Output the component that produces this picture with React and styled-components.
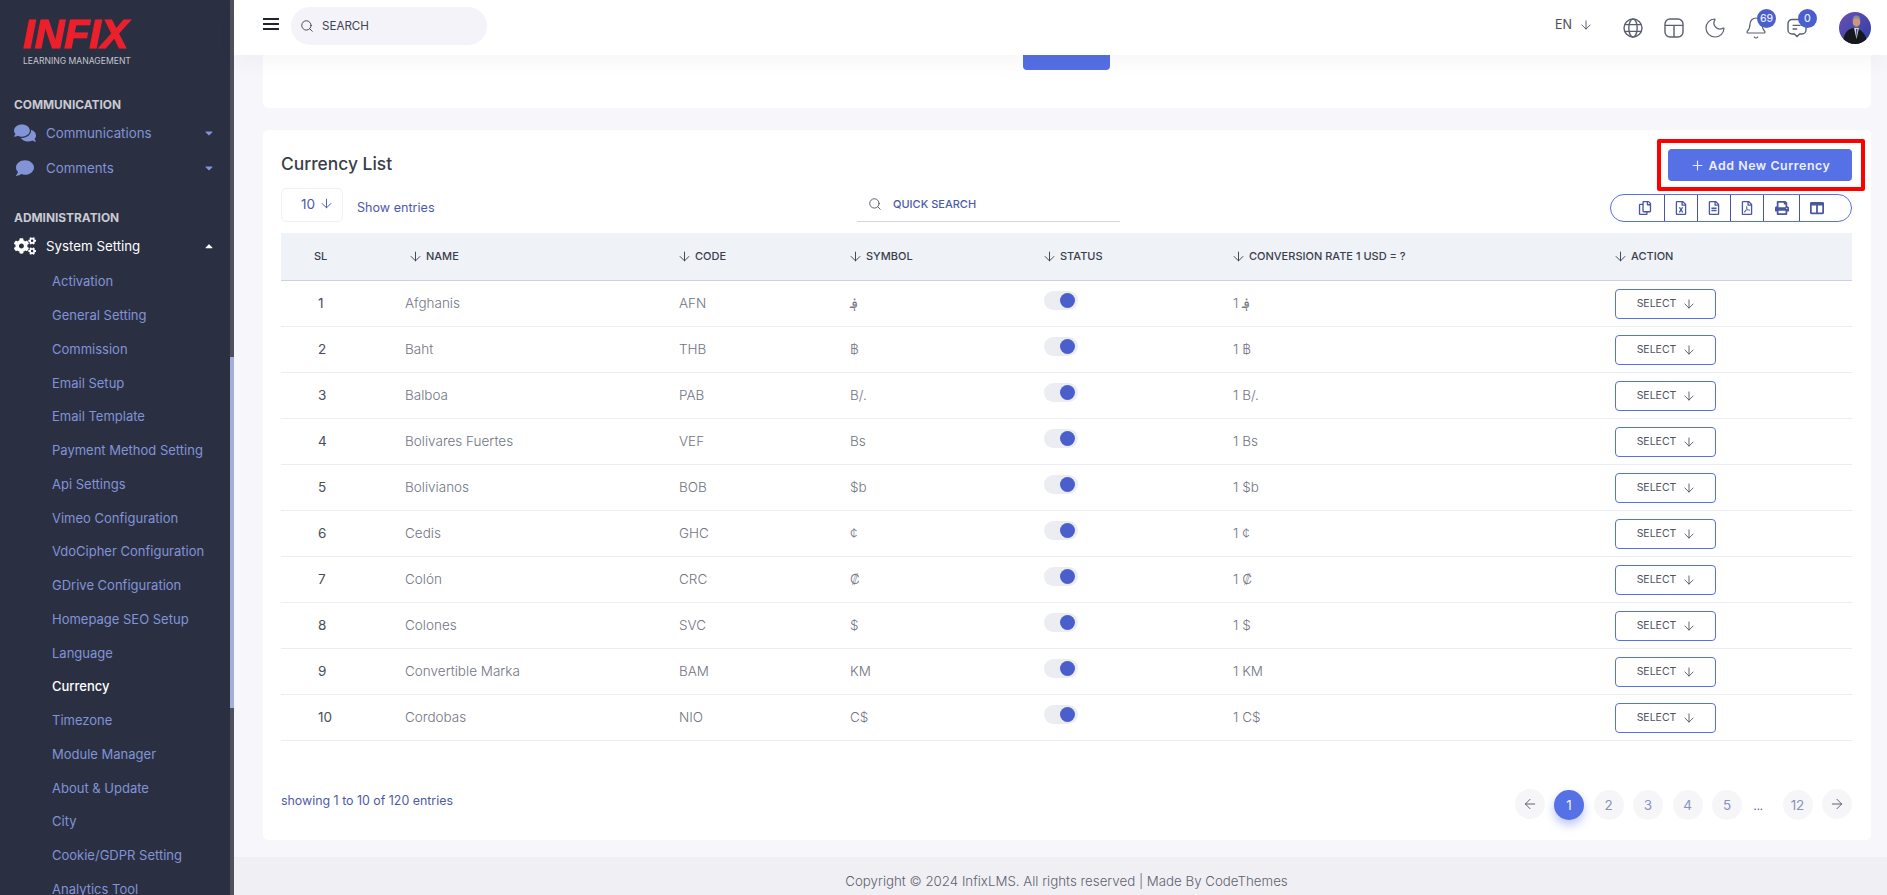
import React from "react";
import styled, { createGlobalStyle } from "styled-components";
import { ArrowDown, ArrowLeft, ArrowRight, Bell, Moon, Plus, Search } from "lucide-react";
import { FaCaretDown, FaCaretUp, FaCogs, FaColumns, FaComment, FaComments, FaPrint, FaRegCopy, FaRegFileAlt, FaRegFileExcel, FaRegFilePdf } from "react-icons/fa";

const rows = [
  ["Afghanis", "AFN", "؋"],
  ["Baht", "THB", "฿"],
  ["Balboa", "PAB", "B/."],
  ["Bolivares Fuertes", "VEF", "Bs"],
  ["Bolivianos", "BOB", "$b"],
  ["Cedis", "GHC", "¢"],
  ["Colón", "CRC", "₡"],
  ["Colones", "SVC", "$"],
  ["Convertible Marka", "BAM", "KM"],
  ["Cordobas", "NIO", "C$"],
];

const subMenu = [
  "Activation", "General Setting", "Commission", "Email Setup", "Email Template",
  "Payment Method Setting", "Api Settings", "Vimeo Configuration", "VdoCipher Configuration",
  "GDrive Configuration", "Homepage SEO Setup", "Language", "Currency", "Timezone",
  "Module Manager", "About & Update", "City", "Cookie/GDPR Setting", "Analytics Tool",
];

const GlobalStyle = createGlobalStyle`
  * { box-sizing: border-box; }
  html, body { margin: 0; height: 100%; overflow: hidden; }
  body { font-family: Inter, "Noto Sans", "DejaVu Sans", sans-serif; background: #f6f6fb; }
`;

const Shell = styled.div`
  display: flex;
  height: 100vh;
  overflow: hidden;
`;

const Sidebar = styled.aside`
  display: flex;
  flex: 0 0 234px;
  background: #2a3042;
`;

const Nav = styled.nav`
  flex: 1;
  overflow: hidden;
`;

const Track = styled.div`
  flex: 0 0 4px;
  background: #4e515d;
`;

const Thumb = styled.div`
  height: 351px;
  margin-top: 357px;
  background: #a5aed6;
`;

const Logo = styled.div`
  height: 95px;
  padding: 12px 0 0 23px;
`;

const LogoMark = styled.div`
  font-family: "Liberation Sans", sans-serif;
  font-size: 41px;
  font-weight: 700;
  font-style: italic;
  line-height: 44px;
  color: #ed1f2b;
  -webkit-text-stroke: 1.2px #ed1f2b;
`;

const LogoSub = styled.div`
  font-size: 8.6px;
  line-height: 10px;
  color: #c4c6cf;
  white-space: nowrap;
`;

const SectionLabel = styled.div`
  height: 20px;
  padding-left: 14px;
  font-size: 11.9px;
  font-weight: 700;
  line-height: 20px;
  color: #c9cad2;
  margin-top: ${(p) => p.$top || 0}px;
`;

const MenuItem = styled.div`
  display: flex;
  align-items: center;
  height: 35px;
  padding: 0 15px 0 14px;
  font-size: 13.3px;
  color: ${(p) => (p.$open ? "#ffffff" : "#8293d6")};
  svg:first-child { flex: 0 0 22px; margin-right: 10px; }
  svg:last-child { margin-left: auto; font-size: 12px; }
`;

const SubList = styled.div`
  padding-top: 2.4px;
`;

const SubItem = styled.div`
  height: 33.75px;
  padding-left: 52px;
  font-size: 13px;
  line-height: 33.75px;
  white-space: nowrap;
  color: ${(p) => (p.$active ? "#ffffff" : "#8293d6")};
  font-weight: ${(p) => (p.$active ? 500 : 400)};
`;

const Main = styled.div`
  display: flex;
  flex: 1;
  flex-direction: column;
  min-width: 0;
`;

const TopBar = styled.header`
  position: relative;
  z-index: 2;
  display: flex;
  align-items: center;
  flex: 0 0 55px;
  padding: 0 16px 0 29px;
  background: #ffffff;
  box-shadow: 0 8px 20px rgba(40, 40, 60, 0.035);
`;

const Burger = styled.svg`
  width: 16px;
  height: 12px;
  margin: 0 12px 7px 0;
`;

const SearchPill = styled.div`
  display: flex;
  align-items: center;
  gap: 8px;
  width: 196px;
  height: 38px;
  margin-bottom: 3px;
  padding-left: 9px;
  border-radius: 19px;
  background: #f3f3f9;
  font-size: 11.6px;
  color: #3f4350;
`;

const TopRight = styled.div`
  display: flex;
  align-items: center;
  margin-left: auto;
  gap: 21px;
`;

const Lang = styled.div`
  display: flex;
  align-items: center;
  gap: 7px;
  margin-right: 9px;
  margin-bottom: 6px;
  font-size: 12.5px;
  color: #4a4d59;
`;

const IconBox = styled.div`
  position: relative;
  width: 20px;
  height: 20px;
  color: #5b6070;
`;

const BigIcon = styled.span`
  display: block;
  margin: -2px;
  line-height: 0;
`;

const Badge = styled.span`
  position: absolute;
  top: -9px;
  left: 11px;
  min-width: 19px;
  height: 19px;
  border-radius: 50%;
  background: #4a5fcb;
  color: #e9ecfa;
  font-size: 10.5px;
  font-weight: 500;
  line-height: 19px;
  text-align: center;
`;

const Avatar = styled.svg`
  width: 32px;
  height: 32px;
  margin-left: 11px;
`;

const Content = styled.main`
  display: flex;
  flex: 1;
  flex-direction: column;
  gap: 22px;
  min-height: 0;
  padding: 0 16px 0 29px;
  overflow: hidden;
`;

const TopCard = styled.section`
  display: flex;
  justify-content: center;
  flex: 0 0 53px;
  padding-right: 2px;
  background: #ffffff;
  border-radius: 0 0 5px 5px;
`;

const CutButton = styled.div`
  width: 87px;
  height: 15px;
  border-radius: 0 0 4px 4px;
  background: #546fe4;
`;

const Card = styled.section`
  flex: 0 0 708px;
  padding: 19px 19px 20px 18px;
  background: #ffffff;
  border-radius: 5px;
`;

const CardHead = styled.div`
  display: flex;
  align-items: center;
  justify-content: space-between;
  height: 32px;
`;

const Title = styled.h3`
  margin: 0 0 3px;
  font-size: 17.4px;
  font-weight: 500;
  color: #3a3d4a;
`;

const AddButton = styled.button`
  position: relative;
  display: flex;
  align-items: center;
  justify-content: center;
  gap: 4px;
  width: 184px;
  height: 32px;
  padding: 0;
  border: 0;
  border-radius: 4px;
  background: #5670e6;
  color: #ecefff;
  font-family: inherit;
  font-size: 12.4px;
  font-weight: 600;
  letter-spacing: 0.55px;
  &::after {
    content: "";
    position: absolute;
    inset: -10px -13px -10px -11px;
    border: 4px solid #ff0000;
    border-radius: 2px;
  }
`;

const Toolbar = styled.div`
  display: grid;
  grid-template-columns: 576px 263px 1fr;
  height: 34px;
  margin: 7px 0 11px;
`;

const EntryWrap = styled.div`
  display: flex;
  align-items: center;
  gap: 14px;
`;

const EntrySelect = styled.div`
  display: flex;
  align-items: center;
  gap: 4px;
  width: 62px;
  height: 34px;
  padding: 0 0 3px 19px;
  border: 1px solid #eff0f5;
  border-radius: 5px;
  font-size: 13.5px;
  color: #4d5aa8;
`;

const ShowEntries = styled.span`
  padding-top: 4px;
  font-size: 12.6px;
  color: #4d5aa8;
`;

const QuickSearch = styled.div`
  display: flex;
  align-items: center;
  gap: 11px;
  padding: 0 0 1px 11px;
  border-bottom: 1px solid #d3d4e6;
  font-size: 11px;
  font-weight: 500;
  color: #4d5aa8;
  svg { color: #555866; }
`;

const ToolGroup = styled.div`
  display: flex;
  justify-self: end;
  width: 242px;
  height: 28px;
  margin-top: 6px;
  border: 1px solid #5670e6;
  border-radius: 14px;
`;

const ToolCell = styled.div`
  display: flex;
  align-items: center;
  justify-content: ${(p) => p.$align || "center"};
  flex: 0 0 ${(p) => p.$width}px;
  padding: ${(p) => p.$pad || "0"};
  color: #4957a3;
  font-size: 14px;
  & + & { border-left: 1px solid #4957a3; }
`;

const Table = styled.table`
  width: 1571px;
  border-collapse: collapse;
  table-layout: fixed;
`;

const Th = styled.th`
  height: 47px;
  padding: 0 0 0 ${(p) => p.$pad || 0}px;
  background: #eff2f7;
  border-bottom: 1px solid #c9d2e6;
  color: #3a3e4c;
  font-size: 11px;
  font-weight: 500;
  text-align: left;
  white-space: nowrap;
  svg { margin: 0 3px 0 -1px; vertical-align: -4px; }
`;

const Td = styled.td`
  height: 46px;
  padding: 0 0 0 ${(p) => p.$pad ?? 1}px;
  border-bottom: 1px solid #ecedf4;
  color: ${(p) => (p.$strong ? "#4a4d5a" : "#72757f")};
  font-size: 13.5px;
  font-weight: ${(p) => (p.$strong ? 400 : 300)};
`;

const Toggle = styled.span`
  display: flex;
  align-items: center;
  justify-content: flex-end;
  width: 34px;
  height: 19px;
  margin-bottom: 5px;
  padding-right: 3px;
  border-radius: 10px;
  background: #ecedf3;
  &::after {
    content: "";
    width: 15px;
    height: 15px;
    border-radius: 50%;
    background: #4a5fcb;
  }
`;

const SelectButton = styled.button`
  display: flex;
  align-items: center;
  justify-content: center;
  gap: 6px;
  width: 101px;
  height: 30px;
  margin-top: 1px;
  padding: 0 0 0 2px;
  border: 1px solid #5670e6;
  border-radius: 4px;
  background: #ffffff;
  color: #4e515e;
  font-family: inherit;
  font-size: 10.5px;
  font-weight: 400;
`;

const CardFoot = styled.div`
  display: flex;
  align-items: center;
  justify-content: space-between;
  height: 31px;
  margin-top: 48px;
`;

const Showing = styled.span`
  margin-bottom: 7px;
  font-size: 12.4px;
  color: #4d5aa8;
`;

const Pager = styled.div`
  display: flex;
  align-items: flex-start;
  gap: 9.5px;
`;

const PageButton = styled.span`
  display: flex;
  align-items: center;
  justify-content: center;
  width: 30px;
  height: 30px;
  margin-top: ${(p) => (p.$nav ? 0 : 1)}px;
  border-radius: 50%;
  background: ${(p) => (p.$active ? "#5670e6" : "#f6f6f9")};
  box-shadow: ${(p) => (p.$active ? "0 5px 10px rgba(86, 112, 230, 0.4)" : "none")};
  color: ${(p) => (p.$active ? "#f2f4ff" : p.$nav ? "#555866" : "#8a92bd")};
  font-size: 13.5px;
`;

const Dots = styled.span`
  width: 21.5px;
  padding: 10px 0 0 2px;
  font-size: 11px;
  color: #4957a3;
`;

const Footer = styled.footer`
  flex: 0 0 38px;
  padding: 15px 0 0 12px;
  background: #f0f0f4;
  color: #5f6270;
  font-size: 13.3px;
  font-weight: 300;
  line-height: 18px;
  text-align: center;
`;

const GlobeIcon = () => (
  <svg width="20" height="20" viewBox="0 0 20 20" fill="none" stroke="currentColor" strokeWidth="1.4">
    <circle cx="10" cy="10" r="9" />
    <ellipse cx="10" cy="10" rx="4.2" ry="9" />
    <path d="M1.8 6.6h16.4M1.8 13.4h16.4" />
  </svg>
);

const LayoutIcon = () => (
  <svg width="20" height="20" viewBox="0 0 20 20" fill="none" stroke="currentColor" strokeWidth="1.4">
    <rect x="1" y="1" width="18" height="18" rx="5" />
    <path d="M1 7.4h18M10 7.4V19" />
  </svg>
);

const MessageIcon = () => (
  <svg width="20" height="20" viewBox="0 0 20 20" fill="none" stroke="currentColor" strokeWidth="1.4">
    <path d="M5 1.5h10a4 4 0 0 1 4 4v6.5a4 4 0 0 1-4 4h-2.4L10 18.6 7.4 16H5a4 4 0 0 1-4-4V5.5a4 4 0 0 1 4-4z" />
    <path d="M5.6 7.4h8M5.6 11h4.6" />
  </svg>
);

const Arrow = ({ size = 15 }) => <ArrowDown size={size} strokeWidth={1.5} />;

const App = () => {
  return (
    <>
      <GlobalStyle />
      <Shell>
        <Sidebar>
          <Nav>
            <Logo>
              <LogoMark>INFIX</LogoMark>
              <LogoSub>LEARNING MANAGEMENT</LogoSub>
            </Logo>
            <SectionLabel>COMMUNICATION</SectionLabel>
            <MenuItem>
              <FaComments size={20} />
              Communications
              <FaCaretDown />
            </MenuItem>
            <MenuItem>
              <FaComment size={18} />
              Comments
              <FaCaretDown />
            </MenuItem>
            <SectionLabel $top={23}>ADMINISTRATION</SectionLabel>
            <MenuItem $open>
              <FaCogs size={22} />
              System Setting
              <FaCaretUp />
            </MenuItem>
            <SubList>
              {subMenu.map((name) => (
                <SubItem key={name} $active={name === "Currency"}>{name}</SubItem>
              ))}
            </SubList>
          </Nav>
          <Track>
            <Thumb />
          </Track>
        </Sidebar>
        <Main>
          <TopBar>
            <Burger viewBox="0 0 16 12" fill="#22242c">
              <rect width="16" height="2" />
              <rect y="5" width="16" height="2" />
              <rect y="10" width="16" height="2" />
            </Burger>
            <SearchPill>
              <Search size={14} strokeWidth={1.6} />
              SEARCH
            </SearchPill>
            <TopRight>
              <Lang>EN <Arrow size={14} /></Lang>
              <IconBox><GlobeIcon /></IconBox>
              <IconBox><LayoutIcon /></IconBox>
              <IconBox><BigIcon><Moon size={24} strokeWidth={1.2} /></BigIcon></IconBox>
              <IconBox>
                <BigIcon><Bell size={24} strokeWidth={1.2} /></BigIcon>
                <Badge>69</Badge>
              </IconBox>
              <IconBox>
                <MessageIcon />
                <Badge>0</Badge>
              </IconBox>
              <Avatar viewBox="0 0 32 32">
                <defs>
                  <linearGradient id="avatarBg" x1="0" y1="0" x2="1" y2="1">
                    <stop offset="0" stopColor="#6a4fb8" />
                    <stop offset="1" stopColor="#2f3f9e" />
                  </linearGradient>
                  <clipPath id="avatarClip"><circle cx="16" cy="16" r="16" /></clipPath>
                </defs>
                <g clipPath="url(#avatarClip)">
                  <rect width="32" height="32" fill="url(#avatarBg)" />
                  <path d="M4 32c0-10 4-15 11-16 7 1 13 6 13 16z" fill="#16181f" />
                  <path d="M15 16l2.500 11 2.500-11z" fill="#cfd3dc" />
                  <path d="M17 17l.5 9 1-9z" fill="#39425e" />
                  <ellipse cx="17.500" cy="10" rx="3.800" ry="5" fill="#c79a80" />
                  <path d="M13.600 9c0-4 2-5.600 4.200-5.400 2.400.2 3.600 2 3.400 5.200-1-2-2.600-2.800-4.200-2.600-1.600.2-2.800 1-3.400 2.800z" fill="#8f8d8c" />
                  <path d="M15.400 12.500c1 2.800 3.200 2.800 4.200 0v3h-4.200z" fill="#77716f" />
                </g>
              </Avatar>
            </TopRight>
          </TopBar>
          <Content>
            <TopCard>
              <CutButton />
            </TopCard>
            <Card>
              <CardHead>
                <Title>Currency List</Title>
                <AddButton><Plus size={15} strokeWidth={1.8} /> Add New Currency</AddButton>
              </CardHead>
              <Toolbar>
                <EntryWrap>
                  <EntrySelect>10 <Arrow /></EntrySelect>
                  <ShowEntries>Show entries</ShowEntries>
                </EntryWrap>
                <QuickSearch>
                  <Search size={14} strokeWidth={1.6} />
                  QUICK SEARCH
                </QuickSearch>
                <ToolGroup>
                  <ToolCell $width={53} $align="flex-end" $pad="0 12px 0 0"><FaRegCopy /></ToolCell>
                  <ToolCell $width={33}><FaRegFileExcel /></ToolCell>
                  <ToolCell $width={33}><FaRegFileAlt /></ToolCell>
                  <ToolCell $width={33}><FaRegFilePdf /></ToolCell>
                  <ToolCell $width={36}><FaPrint /></ToolCell>
                  <ToolCell $width={34}><FaColumns /></ToolCell>
                </ToolGroup>
              </Toolbar>
              <Table>
                <colgroup>
                  <col width="124" />
                  <col width="273" />
                  <col width="171" />
                  <col width="194" />
                  <col width="189" />
                  <col width="382" />
                  <col width="238" />
                </colgroup>
                <thead>
                  <tr>
                    <Th $pad={33}>SL</Th>
                    <Th $pad={4}><Arrow />NAME</Th>
                    <Th><Arrow />CODE</Th>
                    <Th><Arrow />SYMBOL</Th>
                    <Th><Arrow />STATUS</Th>
                    <Th><Arrow />CONVERSION RATE 1 USD = ?</Th>
                    <Th><Arrow />ACTION</Th>
                  </tr>
                </thead>
                <tbody>
                  {rows.map((row, i) => (
                    <tr key={row[1]}>
                      <Td $pad={37} $strong>{i + 1}</Td>
                      <Td $pad={0}>{row[0]}</Td>
                      <Td>{row[1]}</Td>
                      <Td>{row[2]}</Td>
                      <Td><Toggle /></Td>
                      <Td>1 {row[2]}</Td>
                      <Td><SelectButton>SELECT <Arrow size={14} /></SelectButton></Td>
                    </tr>
                  ))}
                </tbody>
              </Table>
              <CardFoot>
                <Showing>showing 1 to 10 of 120 entries</Showing>
                <Pager>
                  <PageButton $nav><ArrowLeft size={16} strokeWidth={1.4} /></PageButton>
                  <PageButton $active>1</PageButton>
                  <PageButton>2</PageButton>
                  <PageButton>3</PageButton>
                  <PageButton>4</PageButton>
                  <PageButton>5</PageButton>
                  <Dots>...</Dots>
                  <PageButton>12</PageButton>
                  <PageButton $nav><ArrowRight size={16} strokeWidth={1.4} /></PageButton>
                </Pager>
              </CardFoot>
            </Card>
          </Content>
          <Footer>Copyright © 2024 InfixLMS. All rights reserved | Made By CodeThemes</Footer>
        </Main>
      </Shell>
    </>
  );
};

export default App;
